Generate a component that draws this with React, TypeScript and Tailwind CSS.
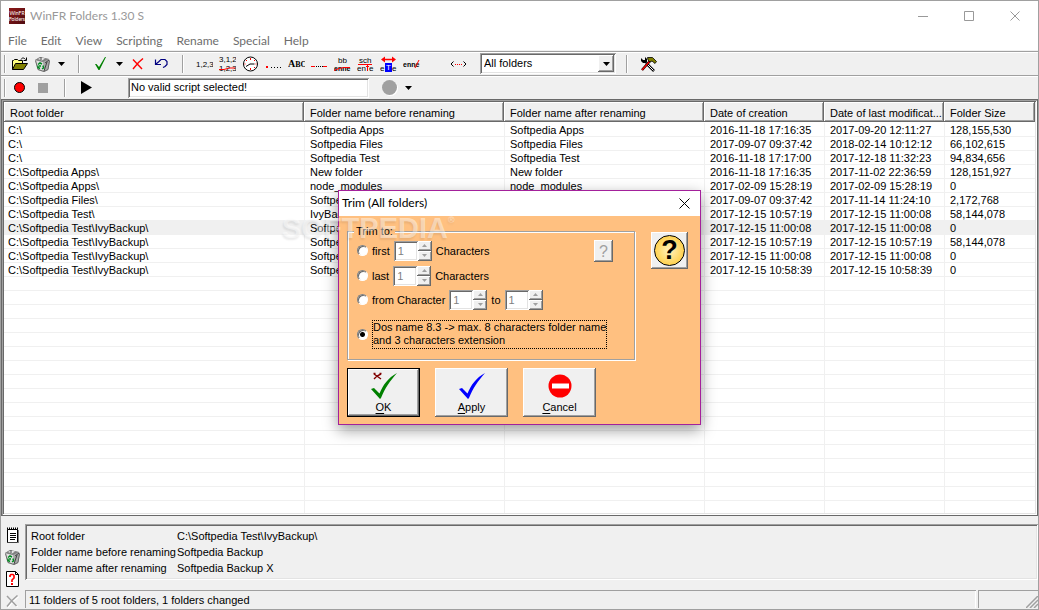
import { useState, type ReactNode } from 'react';
import clsx from 'clsx';

const raised = 'bg-[#f0f0f0] shadow-[inset_-1px_-1px_#696969,inset_1px_1px_#fff,inset_-2px_-2px_#a0a0a0]';
const sunken = 'shadow-[inset_1px_1px_#a0a0a0,inset_-1px_-1px_#fff,inset_2px_2px_#696969,inset_-2px_-2px_#e3e3e3]';

const menus = ['File', 'Edit', 'View', 'Scripting', 'Rename', 'Special', 'Help'];

const columns = [
    { label: 'Root folder', width: 'w-[300px]' },
    { label: 'Folder name before renaming', width: 'w-[200px]' },
    { label: 'Folder name after renaming', width: 'w-[200px]' },
    { label: 'Date of creation', width: 'w-[120px]' },
    { label: 'Date of last modificat...', width: 'w-[120px]' },
    { label: 'Folder Size', width: '' },
];

const rows = [
    ['C:\\', 'Softpedia Apps', 'Softpedia Apps', '2016-11-18 17:16:35', '2017-09-20 12:11:27', '128,155,530'],
    ['C:\\', 'Softpedia Files', 'Softpedia Files', '2017-09-07 09:37:42', '2018-02-14 10:12:12', '66,102,615'],
    ['C:\\', 'Softpedia Test', 'Softpedia Test', '2016-11-18 17:17:00', '2017-12-18 11:32:23', '94,834,656'],
    ['C:\\Softpedia Apps\\', 'New folder', 'New folder', '2016-11-18 17:16:35', '2017-11-02 22:36:59', '128,151,927'],
    ['C:\\Softpedia Apps\\', 'node_modules', 'node_modules', '2017-02-09 15:28:19', '2017-02-09 15:28:19', '0'],
    ['C:\\Softpedia Files\\', 'Softpedia Files', 'Softpedia Files', '2017-09-07 09:37:42', '2017-11-14 11:24:10', '2,172,768'],
    ['C:\\Softpedia Test\\', 'IvyBackup', 'IvyBackup', '2017-12-15 10:57:19', '2017-12-15 11:00:08', '58,144,078'],
    ['C:\\Softpedia Test\\IvyBackup\\', 'Softpedia Backup', 'Softpedia Backup X', '2017-12-15 11:00:08', '2017-12-15 11:00:08', '0'],
    ['C:\\Softpedia Test\\IvyBackup\\', 'Softpedia Files', 'Softpedia Files', '2017-12-15 10:57:19', '2017-12-15 10:57:19', '58,144,078'],
    ['C:\\Softpedia Test\\IvyBackup\\', 'Softpedia Info', 'Softpedia Info', '2017-12-15 11:00:08', '2017-12-15 11:00:08', '0'],
    ['C:\\Softpedia Test\\IvyBackup\\', 'Softpedia Test', 'Softpedia Test', '2017-12-15 10:58:39', '2017-12-15 10:58:39', '0'],
];
const selectedRow = 7;
const emptyRows = Array.from({ length: 17 });

function Glyph({ children, width = 17, height = 16 }: { children: ReactNode; width?: number; height?: number }) {
    return (
        <svg width={width} height={height} viewBox={`0 0 ${width} ${height}`} fill="none" aria-hidden="true" className="shrink-0">
            {children}
        </svg>
    );
}

/* ---------- icons ---------- */

const OpenIcon = () => (
    <Glyph>
        <path d="M1.5 13.5v-9h1l1-1h3l1 1h4v3" fill="#ffff80" stroke="#000" />
        <path d="M1.5 13.5l3-6h12l-4 6z" fill="#808000" stroke="#000" />
        <path d="M10 3.5c1-2 3-2 4.500 0M15.500 1.500v3h-3" stroke="#000" />
    </Glyph>
);

const BinIcon = () => (
    <Glyph>
        <path d="M1 4l5-3 9 2 1 2-2 9-4 2-6-2z" fill="#a8a8a8" />
        <path d="M1 4l8 2 1 10-6-2z" fill="#e0e0e0" />
        <path d="M1 4l5-3 9 2-6 3z" fill="#808080" />
        <path d="M4 3l3-1.500 4 1-3 2z" fill="#e8e8e8" />
        <path d="M7 1v3M11 7l4-3M10 15l3-9" stroke="#444" />
        <path d="M1.500 4.500l2.500 9 6 2 4-2 1.500-9" stroke="#666" />
        <path d="M4 8.500l2-1.500 2 1M9 9.500l.5 2.500-1.500 1M6 12.500l-2-1v-2M5 10h2" stroke="#008a20" strokeWidth="1.500" />
    </Glyph>
);

const DownArrow = () => (
    <Glyph width={7} height={4}>
        <path d="M0 0h7L3.500 4z" fill="#000" />
    </Glyph>
);

const CheckIcon = () => (
    <Glyph width={13} height={15}>
        <path d="M1 8h1.500l2.500 3L11 1h1L5.500 14H4.500z" fill="#008000" />
    </Glyph>
);

const CrossIcon = () => (
    <Glyph width={12} height={12}>
        <path d="M1 1.500l9 9.500M11 .5l-4.500 4L1 11" stroke="#f00" strokeWidth="1.400" />
    </Glyph>
);

const UndoIcon = () => (
    <Glyph width={14} height={11}>
        <path d="M1.500 1.500v5H7M2 6l3-2.500 2-2h4l2 2v3l-2 2-2 1" stroke="#000080" strokeWidth="1.200" />
    </Glyph>
);

const ClockIcon = () => (
    <Glyph>
        <circle cx="8.500" cy="8" r="7" fill="#fff" stroke="#000" />
        <path d="M4 10.500l4-2.500h4.500" stroke="#000" />
        <path d="M8 2h1v2H8zM8 12h1v2H8zM2.500 7.500h1v1h-1zM13.500 7.500h1v1h-1zM4 4h1v1H4zM12 4h1v1h-1zM12 11h1v1h-1z" fill="#f00" />
    </Glyph>
);

const glyphText = "font-['Liberation_Sans',sans-serif] text-[8px]";

const NumberIcon = () => (
    <Glyph>
        <text x="0" y="11" fill="#000" className={glyphText}>1,2,3</text>
    </Glyph>
);

const RenumberIcon = () => (
    <Glyph>
        <text x="0" y="6" fill="#000" className={glyphText}>3,1,2</text>
        <text x="0" y="15" fill="#000" className={glyphText}>1,2,3</text>
        <path d="M0 13.500h5l5-1.500h6" stroke="#f00" />
    </Glyph>
);

const PrefixIcon = () => (
    <Glyph>
        <path d="M1 10h2v2H1z" fill="#f00" />
        <path d="M6 11.500h11" stroke="#000" strokeDasharray="1 2" />
    </Glyph>
);

const AbcIcon = () => (
    <Glyph>
        <text x="0" y="11" fill="#000" className="font-['Liberation_Serif',serif] text-[8px] font-bold">
            <tspan className="text-[10px]">A</tspan>BC
        </text>
    </Glyph>
);

const TrimIcon = () => (
    <Glyph>
        <path d="M0 10.500h4M12 10.500h4" stroke="#f00" />
        <path d="M5 10.500h7" stroke="#000" strokeDasharray="1 1" />
    </Glyph>
);

const StrikeIcon = () => (
    <Glyph>
        <text x="4" y="7" fill="#000" className={glyphText}>bb</text>
        <text x="0" y="15" fill="#000" className="font-['Liberation_Sans',sans-serif] text-[7px] font-bold">enne</text>
        <path d="M0 14.500l5-2 5-1h6" stroke="#f00" />
    </Glyph>
);

const InsertIcon = () => (
    <Glyph>
        <text x="2" y="7" fill="#000" className={glyphText}>sch</text>
        <path d="M1 8.500h14M10.500 8v7M9 10.500h3" stroke="#f00" />
        <text x="0" y="15" fill="#000" className={glyphText}>en</text>
        <text x="12" y="15" fill="#000" className={glyphText}>e</text>
    </Glyph>
);

const SwapIcon = () => (
    <Glyph>
        <path d="M3 3.500h10" stroke="#f00" strokeWidth="1.500" />
        <path d="M1 3.500l4-3v6zM16 3.500l-4-3v6z" fill="#f00" />
        <path d="M5 7h7v9H5z" fill="#00f" />
        <text x="0" y="15" fill="#000" className={glyphText}>e</text>
        <text x="6" y="14" fill="#fff" className={glyphText}>T</text>
        <text x="12" y="15" fill="#000" className={glyphText}>e</text>
    </Glyph>
);

const DropCharIcon = () => (
    <Glyph>
        <text x="0" y="11" fill="#000" className="font-['Liberation_Sans',sans-serif] text-[7px] font-bold">enne</text>
        <path d="M12 12l4-8" stroke="#f00" />
    </Glyph>
);

const RangeIcon = () => (
    <Glyph>
        <path d="M3.500 5.500L1 8l2.500 2.500M13.500 5.500L16 8l-2.500 2.500" stroke="#000" />
        <path d="M5 8h1v1H5zM7 8h1v1H7zM9 8h1v1H9zM11 8h1v1h-1z" fill="#f00" />
    </Glyph>
);

const ToolsIcon = () => (
    <Glyph>
        <path d="M6 7l8 8" stroke="#000" strokeWidth="2.500" />
        <path d="M6.500 7.500l7 7" stroke="#fff" strokeWidth="1" />
        <path d="M1 2v3l2 2h3l1-1V3L5 1v3H3z" fill="#000" />
        <path d="M2 14l8-9" stroke="#000" strokeWidth="2.500" />
        <path d="M2 14l8-9" stroke="#f00" strokeWidth="1.300" />
        <path d="M7.500 1.500h5l4 4-1.500 2-3-2.500-2 1-2-2z" fill="#808000" stroke="#000" strokeWidth=".8" />
    </Glyph>
);

const NotesIcon = () => (
    <Glyph width={14}>
        <path d="M1.500 2.500h10v13h-10z" fill="#fff" stroke="#000" />
        <path d="M12.500 3v13H2" stroke="#808080" />
        <path d="M1 1.500h11" stroke="#000" strokeWidth="2" strokeDasharray="1 1" />
        <path d="M4 6.500h6M4 8.500h6M4 10.500h6M4 12.500h5" stroke="#000" />
    </Glyph>
);

const HelpPageIcon = () => (
    <Glyph width={13}>
        <path d="M.5.5h9l3 3v12H.5z" fill="#fff" stroke="#000" />
        <path d="M9.500.5v3h3" stroke="#000" />
        <path d="M4 6V4.500L5 3.500h2l1 1V7L6 9v2" stroke="#f00" strokeWidth="1.700" />
        <path d="M5 12h2v2H5z" fill="#f00" />
    </Glyph>
);

const ClearIcon = () => (
    <Glyph width={13} height={13}>
        <path d="M2 2l9.500 10M12.500 1.500L7 6.500 2 12.500" stroke="#fff" strokeWidth="1.500" />
        <path d="M1 1l9.500 10M11.500.5L6 5.500 1 11.500" stroke="#a0a0a0" strokeWidth="1.500" />
    </Glyph>
);

const BigCheck = ({ color, cross }: { color: string; cross?: boolean }) => (
    <Glyph width={28} height={28}>
        {cross && <path d="M4 2l7 5M4 7l3-3 4-2M3.500 1.500h2M9.500 1.500h2" stroke="#800000" strokeWidth="1.400" />}
        <path d="M1 17l3-1 5.500 5.500C13 13 18 6 27 1 20 9 15 16 11 26l-1 1z" fill={color} />
    </Glyph>
);

const StopSign = () => (
    <Glyph width={24} height={24}>
        <circle cx="12" cy="12" r="11.500" fill="#f00" />
        <path d="M4 9.500h17v5H4z" fill="#fff" />
    </Glyph>
);

/* ---------- toolbar pieces ---------- */

function ToolButton({ label, children, narrow }: { label: string; children: ReactNode; narrow?: boolean }) {
    return (
        <button type="button" aria-label={label} className={clsx('flex h-[22px] shrink-0 items-center justify-center', narrow ? 'w-[14px]' : 'w-[23px]')}>
            {children}
        </button>
    );
}

function Separator() {
    return (
        <div className="flex w-[21px] shrink-0 justify-center">
            <div className="h-[18px] w-[2px] border-l border-[#a0a0a0] bg-white" />
        </div>
    );
}

const nameTools = [
    { label: 'Number', icon: <NumberIcon /> },
    { label: 'Renumber', icon: <RenumberIcon /> },
    { label: 'Date and time', icon: <ClockIcon /> },
    { label: 'Prefix', icon: <PrefixIcon /> },
    { label: 'Upper and lower case', icon: <AbcIcon /> },
    { label: 'Trim', icon: <TrimIcon /> },
    { label: 'Replace', icon: <StrikeIcon /> },
    { label: 'Insert', icon: <InsertIcon /> },
    { label: 'Swap', icon: <SwapIcon /> },
    { label: 'Delete', icon: <DropCharIcon /> },
];

function Toolbar() {
    return (
        <div className="mt-px flex h-6 items-center border-t border-[#a0a0a0] pl-[3px] shadow-[inset_0_1px_#fff]">
            <div className="mr-[2px] h-[18px] w-[2px] border-l border-[#a0a0a0] bg-white" />
            <ToolButton label="Open folder"><OpenIcon /></ToolButton>
            <ToolButton label="Remove folder"><BinIcon /></ToolButton>
            <ToolButton label="Remove options" narrow><DownArrow /></ToolButton>
            <Separator />
            <ToolButton label="Rename"><CheckIcon /></ToolButton>
            <ToolButton label="Rename options" narrow><DownArrow /></ToolButton>
            <ToolButton label="Discard"><CrossIcon /></ToolButton>
            <ToolButton label="Undo"><UndoIcon /></ToolButton>
            <Separator />
            {nameTools.map((tool) => (
                <ToolButton key={tool.label} label={tool.label}>{tool.icon}</ToolButton>
            ))}
            <div className="ml-6">
                <ToolButton label="Range"><RangeIcon /></ToolButton>
            </div>
            <div className={clsx('relative ml-[10px] h-[21px] w-[136px] bg-white', sunken)}>
                <select aria-label="Folder filter" className="size-full appearance-none bg-transparent pl-1 leading-[21px] outline-none">
                    <option>All folders</option>
                </select>
                <span className={clsx('pointer-events-none absolute inset-y-[2px] right-[2px] flex w-4 items-center justify-center', raised)}>
                    <DownArrow />
                </span>
            </div>
            <Separator />
            <ToolButton label="Settings"><ToolsIcon /></ToolButton>
        </div>
    );
}

function ScriptBar() {
    return (
        <div className="flex h-6 items-center border-t border-[#a0a0a0] pl-[3px] shadow-[inset_0_1px_#fff]">
            <div className="mr-[2px] h-[18px] w-[2px] border-l border-[#a0a0a0] bg-white" />
            <ToolButton label="Record">
                <Glyph width={11} height={11}><circle cx="5.500" cy="5.500" r="5" fill="#f00" stroke="#000" /></Glyph>
            </ToolButton>
            <ToolButton label="Stop">
                <span className="size-[10px] bg-[#a0a0a0]" />
            </ToolButton>
            <Separator />
            <ToolButton label="Play">
                <Glyph width={11} height={13}><path d="M0 0l11 6.500L0 13z" fill="#000" /></Glyph>
            </ToolButton>
            <input
                aria-label="Script"
                defaultValue="No valid script selected!"
                className={clsx('ml-[30px] h-[20px] w-[241px] bg-white pb-[2px] pl-[3px] outline-none', sunken)}
            />
            <div className="ml-[9px] flex">
                <ToolButton label="Script status">
                    <span className="size-[15px] rounded-full bg-[#a0a0a0] shadow-[1px_1px_#fff]" />
                </ToolButton>
                <ToolButton label="Script list" narrow><DownArrow /></ToolButton>
            </div>
        </div>
    );
}

/* ---------- folder list ---------- */

function FolderList() {
    return (
        <main className={clsx('min-h-0 flex-1 basis-0 border border-[#696969] bg-white p-[2px]', sunken)}>
            <div className="h-full overflow-hidden">
                <table className="w-full table-fixed border-separate border-spacing-0">
                    <thead>
                        <tr>
                            {columns.map((col) => (
                                <th key={col.label} className={clsx('h-[21px] border-b border-white bg-[#f0f0f0] p-0 text-left font-normal', col.width)}>
                                    <div className={clsx('h-5 truncate pl-[6px] pt-px leading-[20px]', raised)}>{col.label}</div>
                                </th>
                            ))}
                        </tr>
                    </thead>
                    <tbody>
                        {rows.map((row, i) => (
                            <tr key={i} className={clsx(i === selectedRow && 'bg-[#f0f0f0]')}>
                                {row.map((cell, j) => (
                                    <td
                                        key={j}
                                        className={clsx('h-[14px] whitespace-nowrap border-b border-[#f0f0f0] p-0 pt-px leading-[12px]', j === 0 ? 'pl-1' : 'border-l pl-[5px]')}
                                    >
                                        {cell}
                                    </td>
                                ))}
                            </tr>
                        ))}
                        {emptyRows.map((_, i) => (
                            <tr key={i}>
                                {columns.map((col, j) => (
                                    <td key={col.label} className={clsx('h-[14px] border-b border-[#f0f0f0] p-0', j > 0 && 'border-l')} />
                                ))}
                            </tr>
                        ))}
                    </tbody>
                </table>
            </div>
        </main>
    );
}

/* ---------- trim dialog ---------- */

function Spin({ label }: { label: string }) {
    return (
        <span className="flex h-5">
            <input disabled defaultValue="1" aria-label={label} className={clsx('w-6 bg-white pl-1 text-[#808080]', sunken)} />
            <span className="flex w-[14px] flex-col">
                <button type="button" disabled aria-label={`${label} up`} className={clsx('flex flex-1 items-center justify-center', raised)}>
                    <Glyph width={5} height={3}><path d="M0 3h5L2.500 0z" fill="#a0a0a0" /></Glyph>
                </button>
                <button type="button" disabled aria-label={`${label} down`} className={clsx('flex flex-1 items-center justify-center', raised)}>
                    <Glyph width={5} height={3}><path d="M0 0h5L2.500 3z" fill="#a0a0a0" /></Glyph>
                </button>
            </span>
        </span>
    );
}

function TrimRadio({ id, value, onPick }: { id: string; value: string; onPick: (id: string) => void }) {
    return (
        <input
            type="radio"
            name="trim"
            id={id}
            checked={value === id}
            onChange={() => onPick(id)}
            className="size-[11px] shrink-0 appearance-none rounded-full border border-t-[#808080] border-r-white border-b-white border-l-[#808080] bg-white shadow-[inset_1px_1px_#696969] checked:bg-[radial-gradient(circle,#000_2px,#fff_3px)]"
        />
    );
}

function DialogButton({ accel, rest, icon, isDefault }: { accel: string; rest: string; icon: ReactNode; isDefault?: boolean }) {
    return (
        <button type="button" className={clsx('flex h-[49px] w-[73px] flex-col items-center justify-end', raised, isDefault ? 'border border-black pb-[2px]' : 'pb-[3px]')}>
            <span className="flex h-7 items-center">{icon}</span>
            <span className="leading-[14px]"><span className="underline underline-offset-2">{accel}</span>{rest}</span>
        </button>
    );
}

function TrimDialog() {
    const [mode, setMode] = useState('trim-dos');

    return (
        <div className="absolute inset-0 flex items-center justify-center pt-1">
            <section
                role="dialog"
                aria-label="Trim (All folders)"
                className="relative w-[363px] border border-[#a3219b] bg-[#ffc080] shadow-[0_5px_14px_rgba(0,0,0,0.4)]"
            >
                <header className="flex h-[25px] items-center justify-between bg-white pl-[3px] pr-[10px] font-[Lato,sans-serif] text-xs">
                    <h2>Trim (All folders)</h2>
                    <button type="button" aria-label="Close dialog">
                        <Glyph width={11} height={11}><path d="M.5.5l10 10M10.500.5l-10 10" stroke="#000" /></Glyph>
                    </button>
                </header>
                <div className="pb-[7px] pl-2 pr-3 pt-[9px]">
                    <div className="flex items-start gap-4">
                        <fieldset className="min-w-0 flex-1 border border-[#a0a0a0] pb-[10px] pl-[9px] shadow-[1px_1px_#fff,inset_1px_1px_#fff]">
                            <legend className="-ml-[3px] bg-[#ffc080] px-[2px] leading-[13px]">Trim to:</legend>
                            <div className="flex h-[26px] items-center gap-1">
                                <TrimRadio id="trim-first" value={mode} onPick={setMode} />
                                <label htmlFor="trim-first">first</label>
                                <Spin label="First characters" />
                                <span>Characters</span>
                                <button type="button" disabled className={clsx('ml-auto mr-[21px] h-[22px] w-[19px] text-base text-[#a0a0a0]', raised)}>?</button>
                            </div>
                            <div className="flex h-6 items-center gap-1">
                                <TrimRadio id="trim-last" value={mode} onPick={setMode} />
                                <label htmlFor="trim-last">last</label>
                                <Spin label="Last characters" />
                                <span>Characters</span>
                            </div>
                            <div className="flex h-6 items-center gap-1">
                                <TrimRadio id="trim-from" value={mode} onPick={setMode} />
                                <label htmlFor="trim-from">from Character</label>
                                <Spin label="From character" />
                                <span>to</span>
                                <Spin label="To character" />
                            </div>
                            <div className="mt-2 flex items-center gap-1">
                                <TrimRadio id="trim-dos" value={mode} onPick={setMode} />
                                <label htmlFor="trim-dos" className="min-w-[228px] whitespace-nowrap border border-dotted border-black pb-px leading-[13px]">
                                    Dos name 8.3 -&gt; max. 8 characters folder name<br />and 3 characters extension
                                </label>
                            </div>
                        </fieldset>
                        <button type="button" aria-label="Help" className={clsx('mt-[7px] flex size-[37px] items-center justify-center', raised)}>
                            <span className="flex size-[31px] items-center justify-center rounded-full border border-black bg-[radial-gradient(circle,#fff2c0,#ffc420)] text-[27px] font-bold leading-none">
                                ?
                            </span>
                        </button>
                    </div>
                    <div className="mt-2 flex gap-[15px]">
                        <DialogButton accel="O" rest="K" icon={<BigCheck color="#008000" cross />} isDefault />
                        <DialogButton accel="A" rest="pply" icon={<BigCheck color="#0000ff" />} />
                        <DialogButton accel="C" rest="ancel" icon={<StopSign />} />
                    </div>
                </div>
                <span className="pointer-events-none absolute -left-[57px] top-5 flex items-start text-[29px] font-bold leading-[34px] text-white/45 [text-shadow:-1px_2px_2px_rgba(0,0,0,0.08)]">
                    SOFTPEDIA<span className="text-[9px] leading-[18px]">®</span>
                </span>
            </section>
        </div>
    );
}

/* ---------- details and status ---------- */

const details = [
    ['Root folder', 'C:\\Softpedia Test\\IvyBackup\\'],
    ['Folder name before renaming', 'Softpedia Backup'],
    ['Folder name after renaming', 'Softpedia Backup X'],
];

const sideTools = [
    { label: 'Log', icon: <NotesIcon /> },
    { label: 'Remove', icon: <BinIcon /> },
    { label: 'Help page', icon: <HelpPageIcon /> },
    { label: 'Clear', icon: <ClearIcon /> },
];

function BottomPane() {
    return (
        <footer className="flex h-[93px] pb-px pt-2">
            <div className="flex w-6 shrink-0 flex-col">
                {sideTools.map((tool) => (
                    <ToolButton key={tool.label} label={tool.label}>{tool.icon}</ToolButton>
                ))}
            </div>
            <div className="flex min-w-0 flex-1 flex-col gap-[10px]">
                <dl className={clsx('grid h-14 grid-cols-[146px_1fr] content-start pl-[6px] pt-1 leading-[16px]', sunken)}>
                    {details.map(([name, value]) => (
                        <div key={name} className="contents">
                            <dt className="whitespace-nowrap">{name}</dt>
                            <dd>{value}</dd>
                        </div>
                    ))}
                </dl>
                <div className="flex h-[18px] gap-[2px]">
                    <div className="flex flex-1 items-center pl-1 pt-[2px] shadow-[inset_1px_1px_#a0a0a0,inset_-1px_0_#fff]">
                        11 folders of 5 root folders, 1 folders changed
                    </div>
                    <div className="flex w-[60px] items-end justify-end shadow-[inset_1px_1px_#a0a0a0]">
                        <Glyph width={12} height={12}>
                            <path d="M0 12L12 0M4 12l8-8M8 12l4-4" stroke="#a0a0a0" strokeWidth="1.500" />
                        </Glyph>
                    </div>
                </div>
            </div>
        </footer>
    );
}

export default function App() {
    return (
        <div className="relative flex h-screen min-h-[480px] flex-col overflow-hidden border border-[#a0a0a0] bg-[#f0f0f0] font-['Liberation_Sans',Arial,sans-serif] text-[11px] leading-[14px] text-black">
            <div className="bg-white font-[Lato,sans-serif] text-xs text-[#999]">
                <header className="flex h-[30px] items-center pl-2">
                    <span className="flex size-4 flex-col items-center justify-center overflow-hidden bg-linear-to-br from-[#8c1818] to-[#500c10] text-[5px] leading-[6px] text-white">
                        <span>WinFR</span>
                        <span>Folders</span>
                    </span>
                    <h1 className="ml-[5px]">WinFR Folders 1.30 S</h1>
                    <div className="ml-auto flex">
                        <button type="button" aria-label="Minimize" className="flex w-[46px] justify-center">
                            <Glyph width={10} height={10}><path d="M0 5.500h10" stroke="#999" /></Glyph>
                        </button>
                        <button type="button" aria-label="Maximize" className="flex w-[46px] justify-center">
                            <Glyph width={10} height={10}><path d="M.5.5h9v9h-9z" stroke="#999" /></Glyph>
                        </button>
                        <button type="button" aria-label="Close" className="flex w-[46px] justify-center">
                            <Glyph width={10} height={10}><path d="M.5.5l9 9M9.500.5l-9 9" stroke="#999" /></Glyph>
                        </button>
                    </div>
                </header>
                <nav className="flex h-[19px] items-center gap-[14px] pl-[7px] text-[#6d6d6d]">
                    {menus.map((menu) => (
                        <button key={menu} type="button">{menu}</button>
                    ))}
                </nav>
            </div>
            <Toolbar />
            <ScriptBar />
            <FolderList />
            <BottomPane />
            <TrimDialog />
        </div>
    );
}
